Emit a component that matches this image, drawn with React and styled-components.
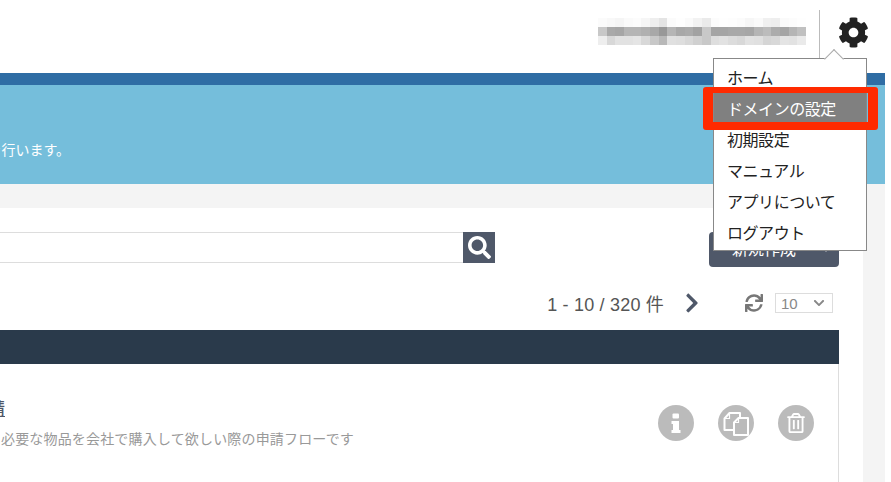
import React from "react";
import styled, { createGlobalStyle } from "styled-components";
import { FaCog, FaSearch, FaChevronRight, FaSync, FaChevronDown, FaPlus, FaRegTrashAlt } from "react-icons/fa";

const JP = `"Noto Sans CJK JP", "Liberation Sans", sans-serif`;
const LATIN = `"Liberation Sans", "Noto Sans CJK JP", sans-serif`;

const Global = createGlobalStyle`
  html, body { margin: 0; padding: 0; background: #fff; }
  body { font-family: ${LATIN}; }
`;

const Page = styled.div`
  position: relative;
  width: 885px;
  height: 482px;
  overflow: hidden;
  background: #f4f4f4;
`;

const Header = styled.header`
  height: 73px;
  background: #fff;
  display: flex;
  justify-content: flex-end;
  align-items: flex-start;
`;

const UserMosaic = styled.svg`
  width: 208px;
  height: 27px;
  margin-top: 18px;
  margin-right: 13px;
  flex: none;
  display: block;
`;

const Divider = styled.div`
  width: 1px;
  height: 48px;
  margin-top: 10px;
  background: #bbb;
`;

const GearBox = styled.div`
  width: 65px;
  height: 73px;
  display: flex;
  justify-content: flex-start;
  padding: 17px 0 0 18px;
  box-sizing: border-box;
  color: #222;
  font-size: 31px;
  line-height: 0;
`;

const BlueBar = styled.div`
  height: 12px;
  background: #2f6da4;
`;

const Band = styled.section`
  height: 99px;
  background: #75bedb;
  overflow: hidden;
  display: flex;
  justify-content: flex-end;
  width: 885px;
`;

const BandInner = styled.div`
  width: 885px;
  flex: none;
  display: flex;
  justify-content: flex-end;
  padding: 54px 815px 0 0;
  box-sizing: border-box;
`;

const BandText = styled.p`
  margin: 0;
  flex: none;
  font: 14px/20px ${JP};
  color: #fff;
  white-space: nowrap;
`;

const Body = styled.main`
  padding: 24px 22px 0 0;
`;

const Card = styled.div`
  background: #fff;
  height: 274px;
  padding: 24px 24px 0 0;
  box-sizing: border-box;
`;

const Toolbar = styled.div`
  display: flex;
  justify-content: space-between;
  align-items: flex-start;
`;

const Search = styled.div`
  display: flex;
  width: 495px;
`;

const SearchInput = styled.div`
  flex: 1;
  height: 31px;
  box-sizing: border-box;
  border: 1px solid #ddd;
  border-left: none;
  border-right: none;
`;

const SearchButton = styled.div`
  width: 32px;
  height: 31px;
  background: #4f5869;
  color: #fff;
  display: flex;
  align-items: center;
  justify-content: center;
  font-size: 23px;
`;

const NewButton = styled.div`
  width: 130px;
  height: 35px;
  box-sizing: border-box;
  padding: 0 9px 3px 23px;
  background: #4f5869;
  border-radius: 4px;
  color: #fff;
  display: flex;
  align-items: center;
  justify-content: space-between;
  font: 16px/20px ${JP};
`;

const Pager = styled.div`
  display: flex;
  justify-content: flex-end;
  align-items: center;
  height: 20px;
  margin-top: 26px;
  padding-right: 6px;
`;

const Range = styled.span`
  font-size: 18px;
  letter-spacing: 0.2px;
  color: #555;
  white-space: nowrap;
`;

const Next = styled.span`
  display: flex;
  margin-left: 17px;
  font-size: 22px;
  color: #4f5869;
`;

const Refresh = styled.span`
  display: flex;
  margin-left: 42px;
  font-size: 18px;
  color: #777;
`;

const PageSize = styled.div`
  width: 58px;
  height: 20px;
  margin-left: 12px;
  box-sizing: border-box;
  border: 1px solid #ddd;
  padding: 0 7px 0 5px;
  display: flex;
  align-items: center;
  justify-content: space-between;
  font-size: 15px;
  color: #888;
`;

const TableHead = styled.div`
  height: 34px;
  margin-top: 17px;
  background: #2a3a4b;
`;

const Row = styled.div`
  height: 118px;
  border-right: 1px solid #ddd;
  display: flex;
  justify-content: space-between;
  overflow: hidden;
`;

const RowText = styled.div`
  width: 354px;
  flex: none;
  padding-top: 32px;
  display: flex;
  flex-direction: column;
  align-items: flex-end;
  overflow: hidden;
`;

const RowTitle = styled.a`
  flex: none;
  align-self: flex-start;
  margin-left: -97px;
  font: 500 17px/24px ${JP};
  color: #4f5869;
  text-decoration: underline;
  white-space: nowrap;
`;

const RowDesc = styled.p`
  flex: none;
  margin: 8px 0 0;
  font: 14px/20px ${JP};
  letter-spacing: 0.17px;
  color: #999;
  white-space: nowrap;
`;

const Actions = styled.div`
  display: flex;
  gap: 24px;
  padding: 41px 24px 0 0;
`;

const Action = styled.span`
  width: 36px;
  height: 36px;
  border-radius: 50%;
  background: #bbb;
  color: #fff;
  display: flex;
  align-items: center;
  justify-content: center;
  font-size: 20px;
`;

const Menu = styled.nav`
  position: absolute;
  left: 713px;
  top: 58px;
  width: 154px;
  height: 193px;
  box-sizing: border-box;
  border: 1px solid #888;
  background: #fff;
  padding-top: 3px;
`;

const Caret = styled.span`
  position: absolute;
  left: 113px;
  top: -7px;
  width: 14px;
  height: 14px;
  background: #fff;
  border-left: 1px solid #aaa;
  border-top: 1px solid #aaa;
  box-sizing: border-box;
  transform: rotate(45deg);
`;

const MenuItem = styled.div`
  position: relative;
  height: 31px;
  padding-left: 13px;
  font: 16px/30px ${JP};
  letter-spacing: -0.45px;
  white-space: nowrap;
  color: ${(p) => (p.$active ? "#fff" : "#222")};
  background: ${(p) => (p.$active ? "#808080" : "transparent")};
`;

const Highlight = styled.div`
  position: absolute;
  left: 703px;
  top: 87px;
  width: 175px;
  height: 43px;
  box-sizing: border-box;
  border-style: solid;
  border-color: #ff2a00;
  border-width: 6px 10px 8px 10px;
  border-radius: 3px;
`;

const TOP = [0xfb,0xf8,0xf5,0xfa,0xfc,0xf6,0xee,0xe4,0xfb,0xfe,0xfa,0xf2,0xea,0xfc,0xfe,0xfd,0xfb,0xf6,0xfa,0xf0,0xee,0xfa,0xfc,0xfe];
const MID = [0xc8,0xa9,0xa6,0xb5,0xb5,0xb0,0xa8,0x98,0xb5,0xa8,0xab,0xa2,0xc8,0xa5,0xa5,0xa8,0xa8,0xa6,0xb5,0xbc,0xac,0xa5,0xb5,0xc0];
const BOT = [0xee,0xd8,0xe2,0xe2,0xe5,0xd8,0xc8,0xb8,0xe0,0xde,0xd8,0xd0,0xc8,0xde,0xe2,0xdc,0xd8,0xe2,0xe0,0xd5,0xd8,0xe4,0xe2,0xea];
const gray = (v) => `rgb(${v},${v},${v})`;

const MENU = ["ホーム", "ドメインの設定", "初期設定", "マニュアル", "アプリについて", "ログアウト"];

const InfoIcon = () => (
  <svg width="36" height="36" viewBox="0 0 36 36" fill="#fff" aria-hidden="true">
    <rect x="14.5" y="8.5" width="6.5" height="5" rx="1" />
    <path d="M13.5 16h7.5v9h1.5v3h-9v-3h1.5v-6h-1.5z" />
  </svg>
);

const CopyIcon = () => (
  <svg width="36" height="36" viewBox="0 0 36 36" fill="none" stroke="#fff" strokeWidth="2" aria-hidden="true">
    <path d="M11.5 8H22v17H6.500V13.500z" strokeLinejoin="round" />
    <path d="M11.500 8v5.500H6.500" strokeWidth="1.200" />
    <path d="M20.500 13H30v17H16V17.500z" fill="#bbb" strokeLinejoin="round" />
    <path d="M20.500 13v4.500H16" strokeWidth="1.200" />
  </svg>
);

export default function App() {
  return (
    <>
      <Global />
      <Page>
        <Header>
          <UserMosaic viewBox="0 0 208 27" shapeRendering="crispEdges" aria-hidden="true">
            {[TOP, MID, BOT].map((row, r) =>
              row.map((v, c) => (
                <rect key={`${r}-${c}`} x={c * 8.67} y={r * 9} width="8.8" height="9" fill={gray(v)} />
              ))
            )}
          </UserMosaic>
          <Divider />
          <GearBox><FaCog /></GearBox>
        </Header>
        <BlueBar />
        <Band>
          <BandInner>
            <BandText>申請フォームの作成や管理を行います。</BandText>
          </BandInner>
        </Band>
        <Body>
          <Card>
            <Toolbar>
              <Search>
                <SearchInput />
                <SearchButton><FaSearch /></SearchButton>
              </Search>
              <NewButton>
                <span>新規作成</span>
                <FaPlus size={8} />
              </NewButton>
            </Toolbar>
            <Pager>
              <Range>1 - 10 / 320 件</Range>
              <Next><FaChevronRight /></Next>
              <Refresh><FaSync /></Refresh>
              <PageSize>
                <span>10</span>
                <FaChevronDown size={12} color="#888" />
              </PageSize>
            </Pager>
            <TableHead />
            <Row>
              <RowText>
                <RowTitle>備品購入申請</RowTitle>
                <RowDesc>業務に必要な物品を会社で購入して欲しい際の申請フローです</RowDesc>
              </RowText>
              <Actions>
                <Action><InfoIcon /></Action>
                <Action><CopyIcon /></Action>
                <Action><FaRegTrashAlt /></Action>
              </Actions>
            </Row>
          </Card>
        </Body>
        <Menu>
          <Caret />
          {MENU.map((m, i) => (
            <MenuItem key={m} $active={i === 1}>{m}</MenuItem>
          ))}
        </Menu>
        <Highlight />
      </Page>
    </>
  );
}
